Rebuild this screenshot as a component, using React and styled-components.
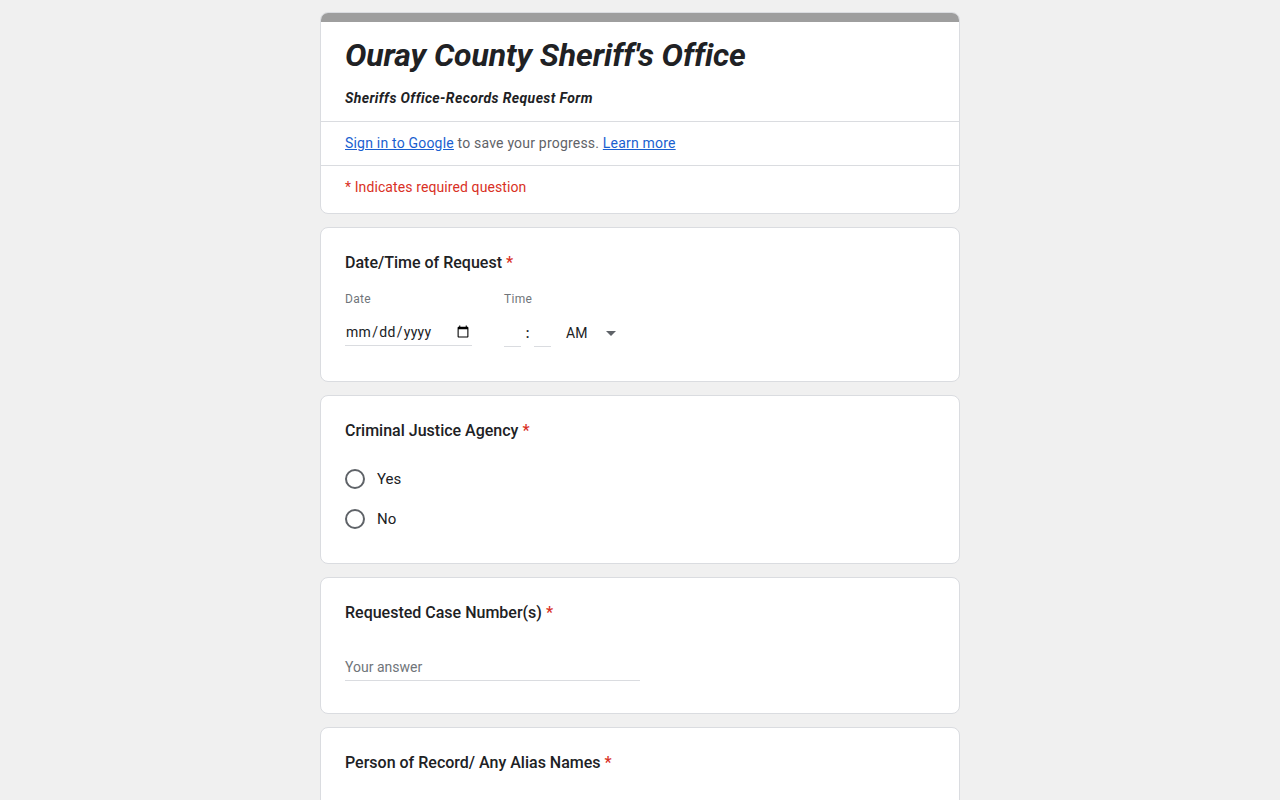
import React from 'react';
import styled, { createGlobalStyle } from 'styled-components';

const Global = createGlobalStyle`
  body {
    margin: 0;
    background: #f0f0f0;
    font-family: Roboto, "Noto Sans", Arial, sans-serif;
    color: #202124;
  }
`;

const Page = styled.div`
  width: 640px;
  margin: 0 auto;
  padding-top: 12px;
  display: flex;
  flex-direction: column;
  gap: 13px;
`;

const Card = styled.div`
  background: #fff;
  border: 1px solid #dadce0;
  border-radius: 8px;
  overflow: hidden;
`;

const TopBar = styled.div`
  height: 10px;
  background: #9e9e9e;
  margin: -1px -1px 0;
`;

const HeaderTop = styled.div`
  padding: 13px 24px 13px;
  border-bottom: 1px solid #dadce0;
`;

const Title = styled.div`
  font-size: 32px;
  line-height: 40px;
  font-weight: 700;
  font-style: italic;
  letter-spacing: -0.1px;
  color: #202124;
`;

const Subtitle = styled.div`
  margin-top: 13px;
  font-size: 14px;
  line-height: 20px;
  font-weight: 700;
  font-style: italic;
  letter-spacing: 0.4px;
  color: #202124;
`;

const InfoRow = styled.div`
  height: ${p => p.h}px;
  box-sizing: border-box;
  display: flex;
  align-items: center;
  padding: 0 24px ${p => p.pb || 0}px;
  font-size: 14px;
  letter-spacing: ${p => p.red ? '0.1px' : '0.2px'};
  color: ${p => p.red ? '#d93025' : '#5f6368'};
  border-bottom: ${p => p.last ? 'none' : '1px solid #dadce0'};
`;

const Link = styled.a`
  color: #1a5fd0;
  text-decoration: underline;
  cursor: pointer;
`;

const Body = styled.div`
  padding: ${p => p.pt || 23}px 24px ${p => p.pb}px;
`;

const Question = styled.div`
  font-size: 16px;
  line-height: 24px;
  font-weight: 500;
  color: #202124;
`;

const Star = styled.span`
  color: #d93025;
  margin-left: 4px;
`;

const DateTimeRow = styled.div`
  display: flex;
  gap: 32px;
  margin-top: 16px;
`;

const Field = styled.div`
  display: flex;
  flex-direction: column;
`;

const Label = styled.div`
  font-size: 12px;
  line-height: 16px;
  color: #70757a;
  letter-spacing: 0.3px;
  margin-bottom: 12px;
`;

const DateInput = styled.input`
  width: 127px;
  box-sizing: border-box;
  border: none;
  border-bottom: 1px solid #dadce0;
  font-family: Roboto, Arial, sans-serif;
  font-size: 14px;
  letter-spacing: 0.3px;
  color: #202124;
  padding: 0;
  height: 27px;
  outline: none;
  background: transparent;
`;

const TimeRow = styled.div`
  display: flex;
  align-items: center;
  height: 28px;
`;

const TimeBox = styled.div`
  width: 17px;
  height: 28px;
  border-bottom: 1px solid #dadce0;
  box-sizing: border-box;
`;

const Colon = styled.span`
  width: 13px;
  text-align: center;
  font-size: 14px;
  font-weight: 500;
  color: #202124;
`;

const AmPm = styled.div`
  display: flex;
  align-items: center;
  margin-left: 15px;
  font-size: 14px;
  color: #202124;
  gap: 19px;
`;

const Arrow = styled.span`
  width: 0;
  height: 0;
  border-left: 5px solid transparent;
  border-right: 5px solid transparent;
  border-top: 5px solid #5f6368;
`;

const Options = styled.div`
  margin-top: 16px;
  display: flex;
  flex-direction: column;
`;

const Option = styled.label`
  height: 40px;
  display: flex;
  align-items: center;
  gap: 12px;
  font-size: 15px;
  color: #202124;
`;

const Radio = styled.span`
  width: 20px;
  height: 20px;
  box-sizing: border-box;
  border: 2px solid #5f6368;
  border-radius: 50%;
`;

const Answer = styled.div`
  margin-top: 30px;
  width: 295px;
  height: 26px;
  box-sizing: border-box;
  border-bottom: 1px solid #dadce0;
  font-size: 14px;
  color: #70757a;
  display: flex;
  align-items: center;
  padding-bottom: 2px;
`;

export default function App() {
  return (
    <>
      <Global />
      <Page>
        <Card>
          <TopBar />
          <HeaderTop>
            <Title>Ouray County Sheriff's Office</Title>
            <Subtitle>Sheriffs Office-Records Request Form</Subtitle>
          </HeaderTop>
          <InfoRow h={44} pb={1}>
            <Link>Sign in to Google</Link>&nbsp;to save your progress.&nbsp;<Link>Learn more</Link>
          </InfoRow>
          <InfoRow h={47} pb={6} red last>* Indicates required question</InfoRow>
        </Card>

        <Card>
          <Body pt={23} pb={34}>
            <Question>Date/Time of Request<Star>*</Star></Question>
            <DateTimeRow>
              <Field>
                <Label>Date</Label>
                <DateInput type="date" />
              </Field>
              <Field>
                <Label>Time</Label>
                <TimeRow>
                  <TimeBox />
                  <Colon>:</Colon>
                  <TimeBox />
                  <AmPm>AM<Arrow /></AmPm>
                </TimeRow>
              </Field>
            </DateTimeRow>
          </Body>
        </Card>

        <Card>
          <Body pb={24}>
            <Question>Criminal Justice Agency<Star>*</Star></Question>
            <Options>
              <Option><Radio />Yes</Option>
              <Option><Radio />No</Option>
            </Options>
          </Body>
        </Card>

        <Card>
          <Body pb={32}>
            <Question>Requested Case Number(s)<Star>*</Star></Question>
            <Answer>Your answer</Answer>
          </Body>
        </Card>

        <Card>
          <Body pb={120}>
            <Question>Person of Record/ Any Alias Names<Star>*</Star></Question>
          </Body>
        </Card>
      </Page>
    </>
  );
}
